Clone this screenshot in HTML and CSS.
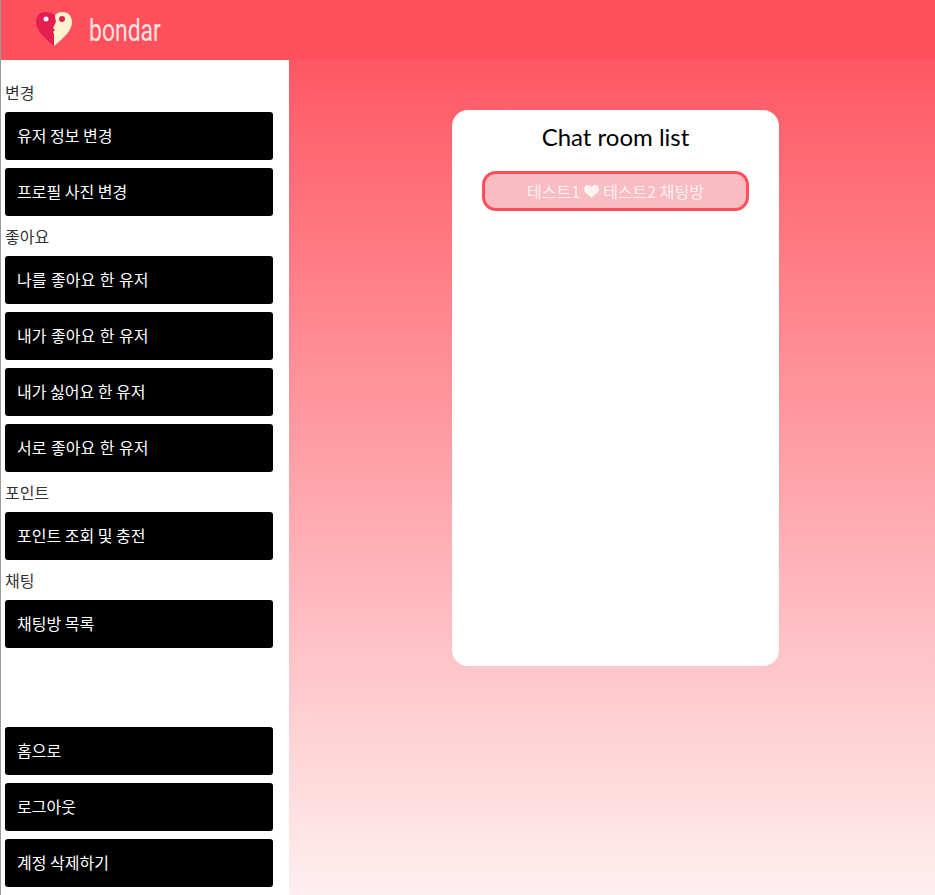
FILE: index.html
```html
<html>
<head>
    <title>bondar</title>
    <link rel="stylesheet" href="styles.css">
</head>
<body>
    <div class="header">
        <svg class="logo" width="38" height="36" viewBox="0 0 38 36">
            <path fill="#e41f4f" d="M19 35 C8 26 1 19 1 11 C1 5 5 1 10 1 C14 1 17 2 20 4 L21 9 L19 17 L20 20 L19 35 Z"/>
            <path fill="#fdf4cf" d="M19 35 C30 26 37 19 37 11 C37 5 33 1 28 1 C24 1 22 2 20 4 C20 8 21 9 21 11 L18 17 L20 19 L18 21 L19 23 L19 35 Z"/>
            <circle cx="11" cy="8" r="2.5" fill="#fff"/>
            <circle cx="27" cy="8" r="3" fill="#e41f4f"/>
        </svg>
        <span class="brand">bondar</span>
    </div>
    <div class="wrap">
        <div class="sidebar">
            <div class="label">변경</div>
            <a class="menuBtn">유저 정보 변경</a>
            <a class="menuBtn">프로필 사진 변경</a>
            <div class="label">좋아요</div>
            <a class="menuBtn spaced">나를 좋아요 한 유저</a>
            <a class="menuBtn spaced">내가 좋아요 한 유저</a>
            <a class="menuBtn">내가 싫어요 한 유저</a>
            <a class="menuBtn spaced">서로 좋아요 한 유저</a>
            <div class="label">포인트</div>
            <a class="menuBtn">포인트 조회 및 충전</a>
            <div class="label">채팅</div>
            <a class="menuBtn">채팅방 목록</a>
            <div class="bottomMenu">
                <a class="menuBtn">홈으로</a>
                <a class="menuBtn">로그아웃</a>
                <a class="menuBtn">계정 삭제하기</a>
            </div>
        </div>
        <div class="main">
            <div class="card">
                <h2 class="title">Chat room list</h2>
                <a class="room">테스트1 <svg class="heart" width="15" height="13" viewBox="0 0 15 13"><path fill="#fdf1f2" d="M7.5 13 C5 10.5 0 8 0 4 C0 1.5 1.8 0 3.8 0 C5.3 0 6.8 .8 7.5 2 C8.2 .8 9.7 0 11.2 0 C13.2 0 15 1.5 15 4 C15 8 10 10.5 7.5 13 Z"/></svg> 테스트2 채팅방</a>
            </div>
        </div>
    </div>
</body>
</html>
```
FILE: styles.css
```css
body {
    margin: 0;
    height: 895px;
    overflow: hidden;
    background: linear-gradient(#ff4d5a, #ffeff0);
    font-family: "Noto Sans CJK KR", "Noto Sans", sans-serif;
    border-left: 1px solid #9a9a9a;
    box-sizing: border-box;
}
.header {
    height: 60px;
    display: flex;
    align-items: center;
    padding-left: 34px;
    background-color: #ff505c;
}
.logo {
    margin-top: -2px;
}
.brand {
    display: inline-block;
    margin-left: 16px;
    font-family: "Roboto", sans-serif;
    font-size: 31px;
    color: #ffe3e3;
    transform: scaleX(0.74);
    transform-origin: left;
}
.wrap {
    display: flex;
    height: 835px;
}
.sidebar {
    width: 288px;
    box-sizing: border-box;
    padding: 20px 16px 0 4px;
    background-color: white;
}
.label {
    height: 24px;
    line-height: 24px;
    margin-bottom: 8px;
    font-size: 16px;
    color: #333;
}
.menuBtn {
    display: block;
    height: 48px;
    line-height: 47px;
    margin-bottom: 8px;
    padding-left: 12px;
    border-radius: 3px;
    background-color: black;
    color: white;
    font-size: 16px;
}
.spaced {
    word-spacing: 1px;
}
.bottomMenu {
    margin-top: 79px;
}
.main {
    flex: 1;
    display: flex;
    justify-content: center;
    align-items: flex-start;
    padding: 50px 0 0 7px;
}
.card {
    width: 327px;
    height: 556px;
    box-sizing: border-box;
    padding-top: 10px;
    border-radius: 16px;
    background-color: white;
    text-align: center;
}
.title {
    margin: 0 0 17px;
    height: 34px;
    line-height: 34px;
    font-family: "Lato", sans-serif;
    font-size: 24px;
    font-weight: 400;
    color: black;
}
.room {
    display: flex;
    align-items: center;
    justify-content: center;
    gap: 4px;
    width: 267px;
    height: 40px;
    margin: 0 auto;
    box-sizing: border-box;
    border: 3px solid #ff4d5a;
    border-radius: 14px;
    background-color: #f8bcc2;
    color: #fdf1f2;
    font-size: 16px;
}
```
